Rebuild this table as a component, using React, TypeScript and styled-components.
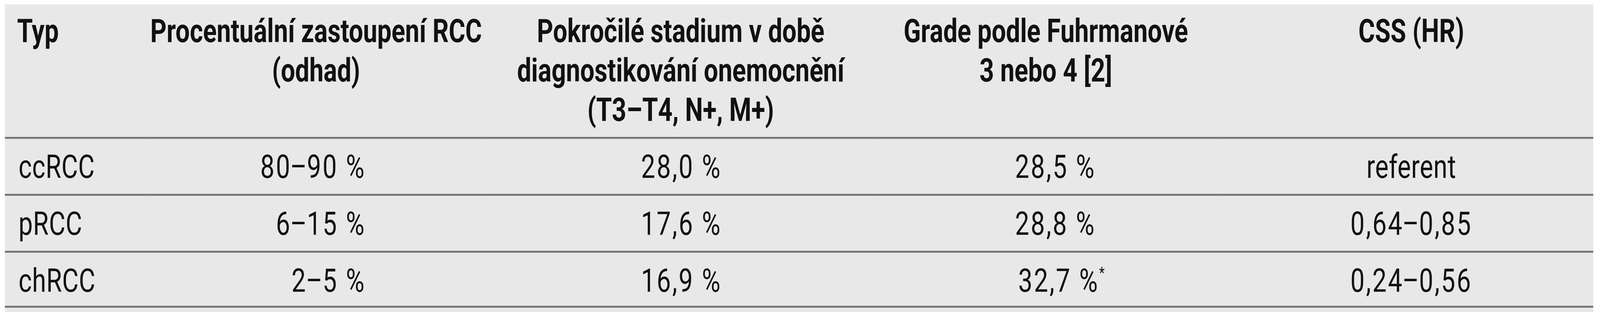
import { Fragment, useEffect, useState } from 'react';
import styled, { createGlobalStyle } from 'styled-components';

// the table is laid out on the 5249px-wide reference sheet and then fitted to the viewport width
const SHEET_WIDTH = 5249;

const GlobalStyle = createGlobalStyle`
  html, body {
    margin: 0;
    padding: 0;
    background: #ffffff;
    overflow: hidden;
  }
`;

const Sheet = styled.div`
  width: ${SHEET_WIDTH}px;
  padding: 11px 0 0 16px;
  box-sizing: border-box;
  transform-origin: 0 0;
`;

const Frame = styled.div`
  width: 5211px;
  height: 789px;
  background: #e8e8e8;
  color: #111111;
  font-family: Roboto, "Liberation Sans", Arial, sans-serif;
  font-stretch: 92%;
  font-size: 83px;
`;

const Table = styled.table`
  width: 5211px;
  table-layout: fixed;
  border-collapse: separate;
  border-spacing: 0;
`;

const HeadCell = styled.th<{ $align?: 'left' | 'center'; $shift?: number }>`
  font-weight: 700;
  line-height: 101px;
  vertical-align: top;
  text-align: ${(p) => p.$align ?? 'center'};
  padding: 18px 0 19px ${(p) => (p.$align === 'left' ? 40 : 0) + (p.$shift ?? 0)}px;
  border-bottom: 5px solid #777777;
  white-space: nowrap;
`;

const BodyCell = styled.td<{
  $align?: 'left' | 'right' | 'center';
  $numeric?: boolean;
  $padRight?: number;
  $shift?: number;
}>`
  font-weight: 400;
  letter-spacing: ${(p) => (p.$numeric ? '0.055em' : '0.01em')};
  line-height: 101px;
  vertical-align: top;
  white-space: nowrap;
  text-align: ${(p) => p.$align ?? 'right'};
  padding: 21px ${(p) => p.$padRight ?? 0}px 19px ${(p) => (p.$align === 'left' ? 45 : 0) + (p.$shift ?? 0)}px;
  border-bottom: 5px solid #777777;

  tr:last-child > & {
    padding-bottom: 14px;
  }
`;

const Dash = styled.span`
  margin: 0 -0.05em;
`;

const Mark = styled.sup`
  font-size: 0.5em;
  line-height: 0;
  vertical-align: 0.85em;
  margin-right: -0.8em;
`;

type Row = {
  type: string;
  share: string;
  advanced: string;
  grade: string;
  gradeMark?: boolean;
  css: string;
};

const rows: Row[] = [
  { type: 'ccRCC', share: '80–90 %', advanced: '28,0 %', grade: '28,5 %', css: 'referent' },
  { type: 'pRCC', share: '6–15 %', advanced: '17,6 %', grade: '28,8 %', css: '0,64–0,85' },
  { type: 'chRCC', share: '2–5 %', advanced: '16,9 %', grade: '32,7 %', gradeMark: true, css: '0,24–0,56' },
];

function Range({ value }: { value: string }) {
  const parts = value.split('–');
  return (
    <>
      {parts.map((part, i) => (
        <Fragment key={i}>
          {i > 0 && <Dash>–</Dash>}
          {part}
        </Fragment>
      ))}
    </>
  );
}

function useFit() {
  const [k, setK] = useState(() => window.innerWidth / SHEET_WIDTH);
  useEffect(() => {
    const onResize = () => setK(window.innerWidth / SHEET_WIDTH);
    window.addEventListener('resize', onResize);
    return () => window.removeEventListener('resize', onResize);
  }, []);
  return k;
}

export default function App() {
  const k = useFit();
  return (
    <Sheet style={{ transform: `scaleX(${k})` }}>
      <GlobalStyle />
      <Frame>
        <Table>
          <colgroup>
            <col style={{ width: 464 }} />
            <col style={{ width: 1114 }} />
            <col style={{ width: 1278 }} />
            <col style={{ width: 1118 }} />
            <col style={{ width: 1237 }} />
          </colgroup>
          <thead>
            <tr>
              <HeadCell $align="left">Typ</HeadCell>
              <HeadCell>
                Procentuální zastoupení RCC
                <br />
                (odhad)
              </HeadCell>
              <HeadCell>
                Pokročilé stadium v době
                <br />
                diagnostikování onemocnění
                <br />
                (T3–T4, N+, M+)
              </HeadCell>
              <HeadCell>
                Grade podle Fuhrmanové
                <br />3 nebo 4 [2]
              </HeadCell>
              <HeadCell $shift={43}>CSS (HR)</HeadCell>
            </tr>
          </thead>
          <tbody>
            {rows.map((r) => (
              <tr key={r.type}>
                <BodyCell $align="left">{r.type}</BodyCell>
                <BodyCell $numeric $padRight={394}>
                  <Range value={r.share} />
                </BodyCell>
                <BodyCell $numeric $padRight={504}>
                  {r.advanced}
                </BodyCell>
                <BodyCell $numeric $padRight={395}>
                  {r.grade}
                  {r.gradeMark && <Mark>*</Mark>}
                </BodyCell>
                <BodyCell $align="center" $numeric={r.css !== 'referent'} $shift={43}>
                  <Range value={r.css} />
                </BodyCell>
              </tr>
            ))}
          </tbody>
        </Table>
      </Frame>
    </Sheet>
  );
}
